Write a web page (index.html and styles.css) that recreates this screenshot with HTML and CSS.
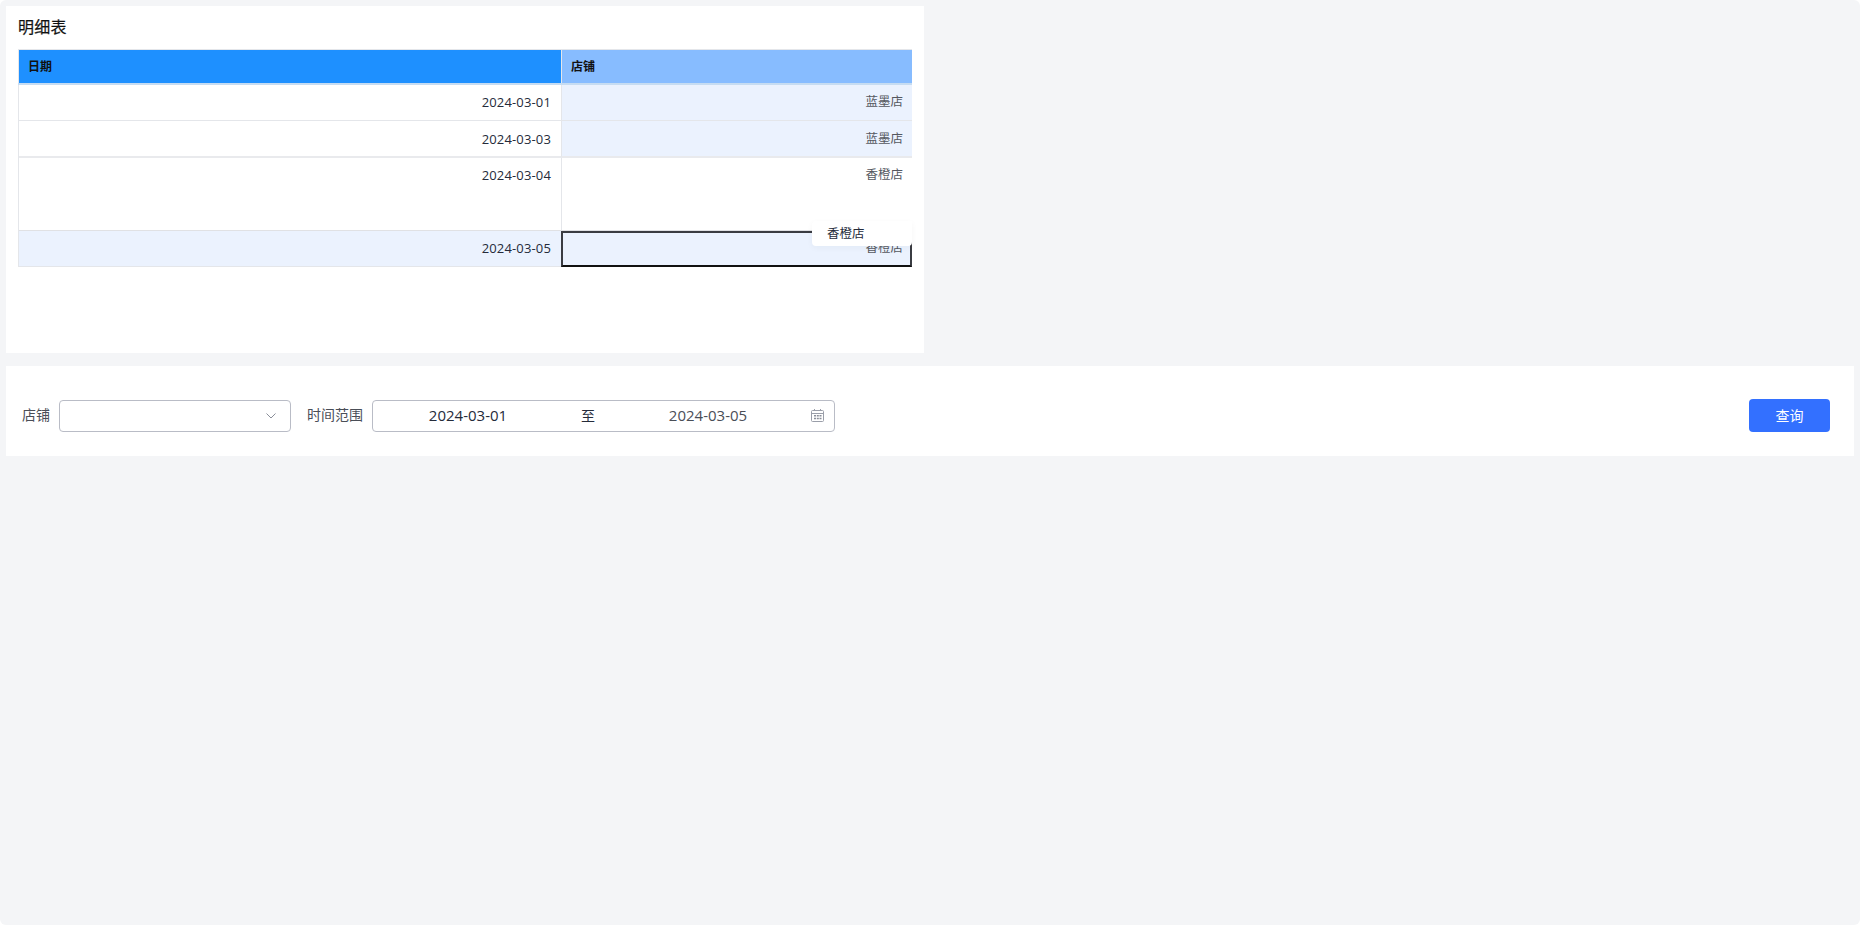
FILE: index.html
```html
<!DOCTYPE html>
<html lang="zh">
<head>
<meta charset="utf-8">
<title>明细表</title>
<link rel="stylesheet" href="styles.css">
</head>
<body>
<div class="page">
  <section class="panel">
    <h2 class="title">明细表</h2>
    <div class="table">
      <div class="head-row">
        <div class="th th-date">日期</div>
        <div class="th th-store">店铺</div>
      </div>
      <div class="row row-a">
        <div class="td">2024-03-01</div>
        <div class="td td-store tint">蓝墨店</div>
      </div>
      <div class="row row-b">
        <div class="td">2024-03-03</div>
        <div class="td td-store tint">蓝墨店</div>
      </div>
      <div class="row row-c">
        <div class="td">2024-03-04</div>
        <div class="td td-store">香橙店</div>
      </div>
      <div class="row row-d">
        <div class="td tint">2024-03-05</div>
        <div class="td td-store tint selected">香橙店</div>
      </div>
      <div class="tooltip">香橙店</div>
    </div>
  </section>
  <section class="filters">
    <span class="label">店铺</span>
    <div class="select">
      <svg class="chev" width="10" height="6" viewBox="0 0 10 6"><path d="M.5.500l4.500 4.500 4.500-4.500" fill="none" stroke="#8a8e99" stroke-width="1"/></svg>
    </div>
    <span class="label label-time">时间范围</span>
    <div class="range">
      <span class="date date-start">2024-03-01</span>
      <span class="sep">至</span>
      <span class="date date-end">2024-03-05</span>
      <svg class="cal" width="13" height="13" viewBox="0 0 13 13"><g fill="none" stroke="#9a9ea9"><rect x=".5" y="1.500" width="12" height="11" rx="1"/><path d="M.5 4.500h12M3.500 0v2M9.500 0v2"/></g><path fill="#8a8e99" d="M3 6h2v1.500H3zM5.800 6h2v1.500h-2zM8.500 6h2v1.500h-2zM3 8.800h2v1.500H3zM5.800 8.800h2v1.500h-2zM8.500 8.800h2v1.500h-2z"/></svg>
    </div>
    <button class="query" type="button">查询</button>
  </section>
</div>
</body>
</html>
```

FILE: styles.css
```css
* { box-sizing: border-box; }
html, body { margin: 0; padding: 0; height: 100%; background: #fff; }
body {
  font-family: "Open Sans", "Noto Sans CJK SC", "Noto Sans", sans-serif;
  font-size: 13px;
  color: #252b3a;
}
.page {
  height: 925px;
  background: #f4f5f7;
  border-radius: 6px;
  padding: 6px;
  display: flex;
  flex-direction: column;
  gap: 13px;
}
.panel {
  width: 918px;
  height: 347px;
  background: #fff;
  padding: 0 12px;
  flex: none;
}
.title {
  margin: 0;
  height: 43px;
  line-height: 43px;
  font-size: 16px;
  font-weight: 400;
  letter-spacing: .2px;
  color: #111;
  -webkit-text-stroke: 0.2px #111;
}
.table { position: relative; width: 894px; }
.head-row {
  display: flex;
  height: 36px;
  border-top: 1px solid #e4e6ea;
  background: #c6dcf2;
}
.th {
  padding: 0 9px;
  line-height: 33px;
  font-weight: 700;
  font-size: 12px;
  color: #111;
  height: 33px;
}
.th-date { width: 543px; background: #1e90ff; border-left: 1px solid #e4e6ea; }
.th-store { width: 351px; background: #87bcff; border-left: 1px solid #e4e6ea; }
.row { display: flex; border-left: 1px solid #e4e6ea; }
.row-a { height: 36px; }
.row-b { height: 37px; }
.row-c { height: 73px; }
.row-d { height: 36px; }
.td {
  width: 542px;
  padding: 8px 10px 0;
  text-align: right;
  border-bottom: 1px solid #e4e6ea;
  line-height: 18px;
  letter-spacing: .15px;
  color: #252b3a;
}
.td-store {
  width: 351px;
  padding-right: 9px;
  border-left: 1px solid #e4e6ea;
  color: #55585f;
  font-size: 12.500px;
  letter-spacing: 0;
}
.row-b .td { padding-top: 9px; border-bottom-width: 2px; border-bottom-color: #e9eaed; }
.tint { background: #ebf2fe; }
.row-c .td { border-bottom: 1px solid #e0e1e4; padding-top: 8px; }
.selected {
  border: 2px solid #3a3c42;
  border-bottom-color: #111;
  padding-top: 6px;
  padding-right: 7px;
}
.tooltip {
  position: absolute;
  left: 794px;
  top: 172px;
  width: 100px;
  height: 25px;
  padding-left: 15px;
  line-height: 25px;
  font-size: 12.500px;
  background: #fff;
  border-radius: 4px 0 4px 4px;
  box-shadow: 0 2px 6px rgba(30, 40, 60, .04);
  color: #252b3a;
}
.filters {
  width: 1848px;
  height: 90px;
  background: #fff;
  padding: 9px 24px 0 16px;
  display: flex;
  align-items: center;
  flex: none;
}
.label { color: #4a4e57; line-height: 32px; font-size: 14px; padding-bottom: 1px; }
.select {
  width: 232px;
  height: 32px;
  margin-left: 9px;
  border: 1px solid #b9bcc6;
  border-radius: 4px;
  background: #fff;
  flex: none;
  display: flex;
  align-items: center;
  justify-content: flex-end;
  padding-right: 14px;
}
.label-time { margin-left: 16px; }
.range {
  width: 463px;
  height: 32px;
  margin-left: 9px;
  padding: 0 10px 2px 0;
  border: 1px solid #b9bcc6;
  border-radius: 4px;
  display: flex;
  align-items: center;
  font-size: 15px;
  flex: none;
}
.date { width: 120px; text-align: center; color: #4a4e57; }
.date-start { margin-left: 35px; color: #252b3a; }
.sep { width: 120px; text-align: center; color: #252b3a; font-size: 14px; }
.cal { margin-left: auto; margin-top: 2px; }
.query {
  margin-left: auto;
  width: 81px;
  height: 33px;
  padding: 0 0 2px;
  border: 0;
  border-radius: 4px;
  background: #3370ff;
  color: #fff;
  font: inherit;
  font-size: 14px;
}
```
